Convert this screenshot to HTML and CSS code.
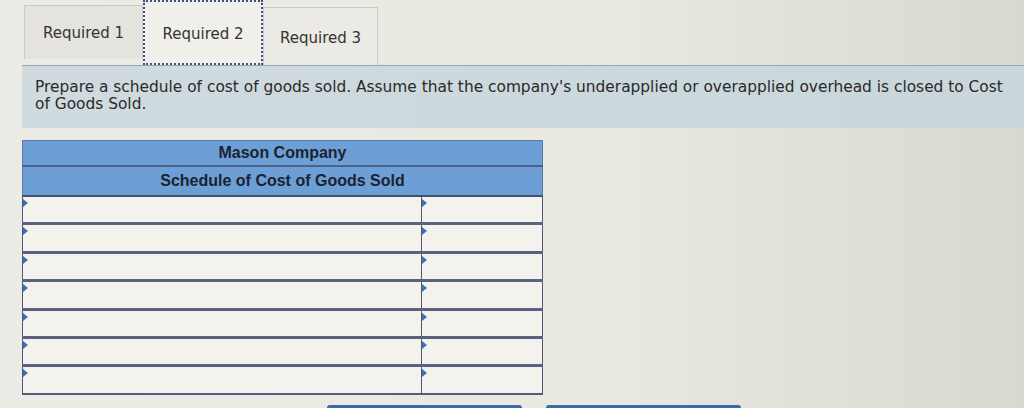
FILE: index.html
```html
<!DOCTYPE html>
<html lang="en">
<head>
  <meta charset="UTF-8">
  <title>Required 2 - Schedule of Cost of Goods Sold</title>
  <link rel="stylesheet" href="styles.css">
</head>
<body>
  <div class="page">
    <div class="tabs">
      <div class="tab">Required 1</div>
      <div class="tab active">Required 2</div>
      <div class="tab last">Required 3</div>
    </div>

    <div class="prompt">
      Prepare a schedule of cost of goods sold. Assume that the company's underapplied or overapplied overhead is closed to Cost of Goods Sold.
    </div>

    <table class="schedule">
      <tr class="head"><th colspan="2">Mason Company</th></tr>
      <tr class="head sub"><th colspan="2">Schedule of Cost of Goods Sold</th></tr>
      <tr><td class="label"></td><td class="amount"></td></tr>
      <tr><td class="label"></td><td class="amount"></td></tr>
      <tr><td class="label"></td><td class="amount"></td></tr>
      <tr><td class="label"></td><td class="amount"></td></tr>
      <tr><td class="label"></td><td class="amount"></td></tr>
      <tr><td class="label"></td><td class="amount"></td></tr>
      <tr><td class="label"></td><td class="amount"></td></tr>
    </table>

    <div class="buttons">
      <button class="btn prev"></button>
      <button class="btn next"></button>
    </div>
  </div>
</body>
</html>
```

FILE: styles.css
```css
/* General */
body {
  margin: 0;
  background: linear-gradient(90deg, #ecebe5 0%, #e9e8e1 60%, #d9d9cf 100%);
  font-family: "DejaVu Sans", Verdana, sans-serif;
  color: #2b2b2b;
  overflow: hidden;
}
.page {
  height: 408px;
  overflow: hidden;
}

/* Tabs */
.tabs {
  display: flex;
  align-items: flex-end;
  margin-left: 24px;
  height: 65px;
}
.tab {
  width: 119px;
  height: 54px;
  margin-bottom: 6px;
  box-sizing: border-box;
  display: flex;
  align-items: center;
  justify-content: center;
  font-size: 15px;
  color: #333;
  background: #e4e3de;
  border: 1px solid #cac9c3;
  border-bottom: none;
}
.tab.active {
  width: 120px;
  height: 65px;
  margin-bottom: 0;
  background: #f0efea;
  border: 2px dotted #3d4f86;
  padding-top: 2px;
}
.tab.last {
  width: 115px;
  height: 58px;
  margin-bottom: 0;
  padding-top: 2px;
  background: #ebeae5;
}

/* Prompt */
.prompt {
  margin-left: 22px;
  padding: 13px 10px 13px 13px;
  background: linear-gradient(90deg, #cfdbdf 0%, #c9d6da 100%);
  border-top: 1px solid #9aa6aa;
  font-size: 15.4px;
  line-height: 17px;
  color: #2a2a2a;
  height: 36px;
}

/* Schedule table */
.schedule {
  margin: 12px 0 0 22px;
  width: 521px;
  border-collapse: collapse;
  font-family: "Liberation Sans", Arial, sans-serif;
}
.head th {
  height: 24px;
  padding: 0;
  background: #6c9fd5;
  color: #1c2230;
  font-size: 16px;
  font-weight: bold;
  border: 1px solid #5a79a6;
  border-bottom: 2px solid #4c6287;
}
.head.sub th {
  height: 28px;
  border-bottom: 2px solid #454f6e;
}
.schedule td {
  position: relative;
  height: 25.4px;
  padding: 0;
  background: #f3f2ec;
  border: 1px solid #4e5878;
  border-bottom: 3px solid #59627e;
}
.schedule tr:last-child td {
  border-bottom: 2px solid #525c7b;
}
.label {
  width: 398px;
}
.amount {
  border-left: 3px solid #4a5573;
}
/* blue marker in the top-left corner of each input cell */
.schedule td::before {
  content: "";
  position: absolute;
  left: 0;
  top: 2px;
  border-left: 5px solid #3f6fb3;
  border-top: 4px solid transparent;
  border-bottom: 4px solid transparent;
}

/* Buttons */
.buttons {
  display: flex;
  gap: 24px;
  margin: 10px 0 0 327px;
}
.btn {
  width: 195px;
  height: 30px;
  border: none;
  border-radius: 3px;
  background: #3b6aa6;
}
```
